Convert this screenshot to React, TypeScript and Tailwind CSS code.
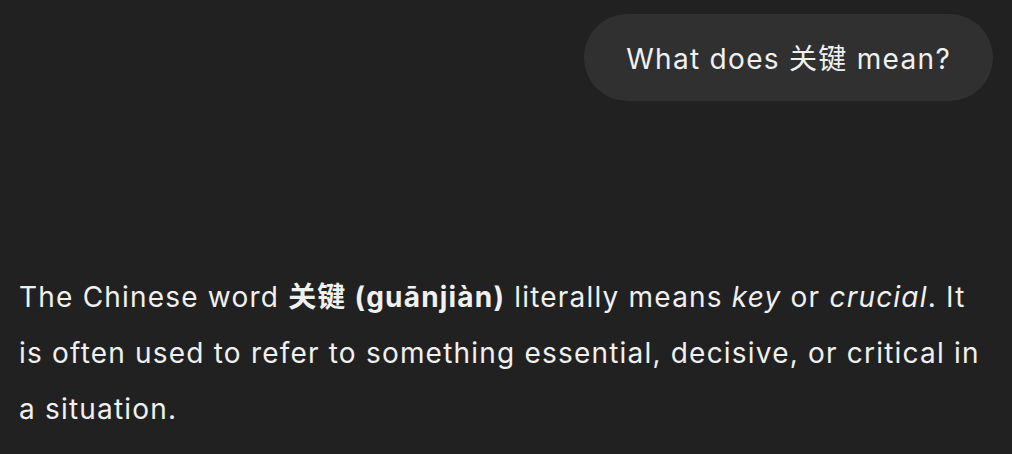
export default function App() {
  const font = { fontFamily: 'Inter, "Noto Sans CJK SC", sans-serif' };
  return (
    <div className="w-[1012px] h-[454px] bg-[#212121] overflow-hidden text-[#f0f0f0]" style={font}>
      <div className="flex justify-end pt-[14px] pr-[19px]">
        <div className="h-[87px] rounded-[44px] bg-[#303030] px-[42px] pt-[2px] flex items-center text-[28px] tracking-[1.3px]">
          What does 关键 mean?
        </div>
      </div>
      <p className="mt-[168px] pl-[19px] pr-[28px] text-[28px] leading-[56px] tracking-[1.2px]">
        The Chinese word <strong className="font-bold">关键 (guānjiàn)</strong> literally means <em>key</em> or <em>crucial</em>. It is often used to refer to something essential, decisive, or critical in a situation.
      </p>
    </div>
  );
}
